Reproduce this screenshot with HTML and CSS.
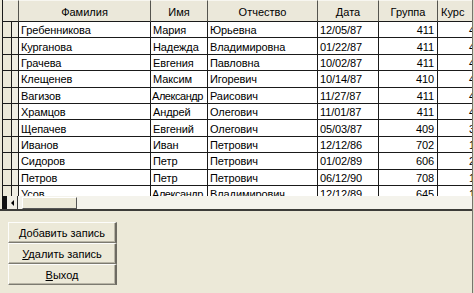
FILE: index.html
```html
<!DOCTYPE html>
<html lang="ru">
<head>
<meta charset="utf-8">
<title>Студенты</title>
<link rel="stylesheet" href="styles.css">
</head>
<body>
<div class="window">
  <div class="main">
    <div class="datagrid">
      <div class="grid-view">
        <div class="grid">
          <div class="hcell sel"></div>
          <div class="hcell">Фамилия</div>
          <div class="hcell">Имя</div>
          <div class="hcell">Отчество</div>
          <div class="hcell">Дата</div>
          <div class="hcell">Группа</div>
          <div class="hcell last">Курс</div>

          <div class="rsel a"></div><div class="rsel b"></div><div class="cell">Гребенникова</div><div class="cell">Мария</div><div class="cell">Юрьевна</div><div class="cell">12/05/87</div><div class="cell num">411</div><div class="cell num">4</div>
          <div class="rsel a"></div><div class="rsel b"></div><div class="cell">Курганова</div><div class="cell">Надежда</div><div class="cell">Владимировна</div><div class="cell">01/22/87</div><div class="cell num">411</div><div class="cell num">4</div>
          <div class="rsel a"></div><div class="rsel b"></div><div class="cell">Грачева</div><div class="cell">Евгения</div><div class="cell">Павловна</div><div class="cell">10/02/87</div><div class="cell num">411</div><div class="cell num">4</div>
          <div class="rsel a"></div><div class="rsel b"></div><div class="cell">Клещенев</div><div class="cell">Максим</div><div class="cell">Игоревич</div><div class="cell">10/14/87</div><div class="cell num">410</div><div class="cell num">4</div>
          <div class="rsel a"></div><div class="rsel b"></div><div class="cell">Вагизов</div><div class="cell tight">Александр</div><div class="cell">Раисович</div><div class="cell">11/27/87</div><div class="cell num">411</div><div class="cell num">4</div>
          <div class="rsel a"></div><div class="rsel b"></div><div class="cell">Храмцов</div><div class="cell">Андрей</div><div class="cell">Олегович</div><div class="cell">11/01/87</div><div class="cell num">411</div><div class="cell num">4</div>
          <div class="rsel a"></div><div class="rsel b"></div><div class="cell">Щепачев</div><div class="cell">Евгений</div><div class="cell">Олегович</div><div class="cell">05/03/87</div><div class="cell num">409</div><div class="cell num">3</div>
          <div class="rsel a"></div><div class="rsel b"></div><div class="cell">Иванов</div><div class="cell">Иван</div><div class="cell">Петрович</div><div class="cell">12/12/86</div><div class="cell num">702</div><div class="cell num">1</div>
          <div class="rsel a"></div><div class="rsel b"></div><div class="cell">Сидоров</div><div class="cell">Петр</div><div class="cell">Петрович</div><div class="cell">01/02/89</div><div class="cell num">606</div><div class="cell num">2</div>
          <div class="rsel a"></div><div class="rsel b"></div><div class="cell">Петров</div><div class="cell">Петр</div><div class="cell">Петрович</div><div class="cell">06/12/90</div><div class="cell num">708</div><div class="cell num">1</div>
          <div class="rsel a"></div><div class="rsel b"></div><div class="cell">Усов</div><div class="cell tight">Александр</div><div class="cell">Владимирович</div><div class="cell">12/12/89</div><div class="cell num">645</div><div class="cell num">1</div>
        </div>
      </div>
      <div class="hscroll">
        <div class="sb-dark"></div>
        <div class="sb-arrow"><span class="tri"></span></div>
        <div class="sb-thumb"></div>
        <div class="sb-track"></div>
      </div>
    </div>
    <div class="buttons">
      <button class="btn" type="button"><u>Д</u>обавить запись</button>
      <button class="btn" type="button"><u>У</u>далить запись</button>
      <button class="btn" type="button"><u>В</u>ыход</button>
    </div>
  </div>
  <div class="edge"></div>
</div>
</body>
</html>
```

FILE: styles.css
```css
html, body {
  margin: 0;
  padding: 0;
  width: 474px;
  height: 293px;
  overflow: hidden;
  background: #ece9d8;
  font-family: "Liberation Sans", Arial, sans-serif;
  font-size: 11px;
  color: #000;
}

.window {
  display: flex;
  width: 474px;
  height: 293px;
}

.main {
  flex: 1;
  min-width: 0;
  overflow: hidden;
  display: flex;
  flex-direction: column;
}

.edge {
  width: 1px;
  border-left: 1px solid #77756c;
  background: #dedbcc;
}

.datagrid {
  padding-left: 2px;
  border-bottom: 2px solid #3c3c38;
}

.grid-view {
  height: 196px;
  overflow: hidden;
  border-left: 1px solid #1a1a1a;
  background: #fff;
}

.grid {
  display: grid;
  grid-template-columns: 9px 7px 132px 57px 110px 61px 59px 41px;
  grid-template-rows: 22px;
  grid-auto-rows: 16.4px;
  width: max-content;
}

.hcell {
  box-sizing: border-box;
  background: #ebe8da;
  border-right: 1px solid #55544e;
  border-bottom: 1px solid #1a1a1a;
  border-top: 1px solid #f7f6f0;
  display: flex;
  align-items: center;
  justify-content: center;
  padding-top: 2px;
  white-space: nowrap;
}

.hcell.sel {
  grid-column: span 2;
}

.hcell.last {
  justify-content: flex-start;
  padding-left: 3px;
}

.rsel {
  box-sizing: border-box;
  background: #ece9d8;
  border-right: 1px solid #1a1a1a;
  border-bottom: 1px solid #1a1a1a;
}

.rsel.b {
  background: #efede2;
}

.cell {
  box-sizing: border-box;
  background: #fff;
  border-right: 1px solid #1a1a1a;
  border-bottom: 1px solid #1a1a1a;
  padding: 1px 1px 0 2px;
  display: flex;
  align-items: center;
  white-space: nowrap;
  overflow: hidden;
  letter-spacing: -0.1px;
}

.cell.tight {
  letter-spacing: -0.45px;
  padding-left: 1px;
}

.cell.num {
  justify-content: flex-end;
  padding-right: 3px;
}

.hscroll {
  display: flex;
  height: 13px;
  background: #f4f3ec;
}

.sb-dark {
  width: 5px;
  background: #111;
}

.sb-arrow {
  box-sizing: border-box;
  width: 11px;
  border-right: 1px solid #333;
  background: #f0eee4;
  display: flex;
  align-items: center;
  justify-content: center;
}

.tri {
  width: 0;
  height: 0;
  border-top: 3px solid transparent;
  border-bottom: 3px solid transparent;
  border-right: 3px solid #000;
}

.sb-thumb {
  box-sizing: border-box;
  width: 55px;
  margin: 1px 0 0 4px;
  background: #ece9d8;
  border-top: 1px solid #fff;
  border-left: 1px solid #fff;
  border-right: 1px solid #555;
  border-bottom: 1px solid #555;
}

.sb-track {
  flex: 1;
}

.buttons {
  display: flex;
  flex-direction: column;
  align-items: flex-start;
  padding: 11px 0 0 8px;
}

.btn {
  box-sizing: border-box;
  width: 109px;
  height: 21px;
  margin: 0;
  padding: 0;
  background: #ece9d8;
  font-family: "Liberation Sans", Arial, sans-serif;
  font-size: 11px;
  color: #000;
  border-style: solid;
  border-width: 1px 2px 1px 1px;
  border-color: #fdfdfb #6d6b62 #7c7a70 #fdfdfb;
  box-shadow: inset -1px -1px #b8b5a6;
  text-align: center;
  line-height: 18px;
}

.btn u {
  text-decoration: underline;
  text-underline-offset: 1px;
}
```
